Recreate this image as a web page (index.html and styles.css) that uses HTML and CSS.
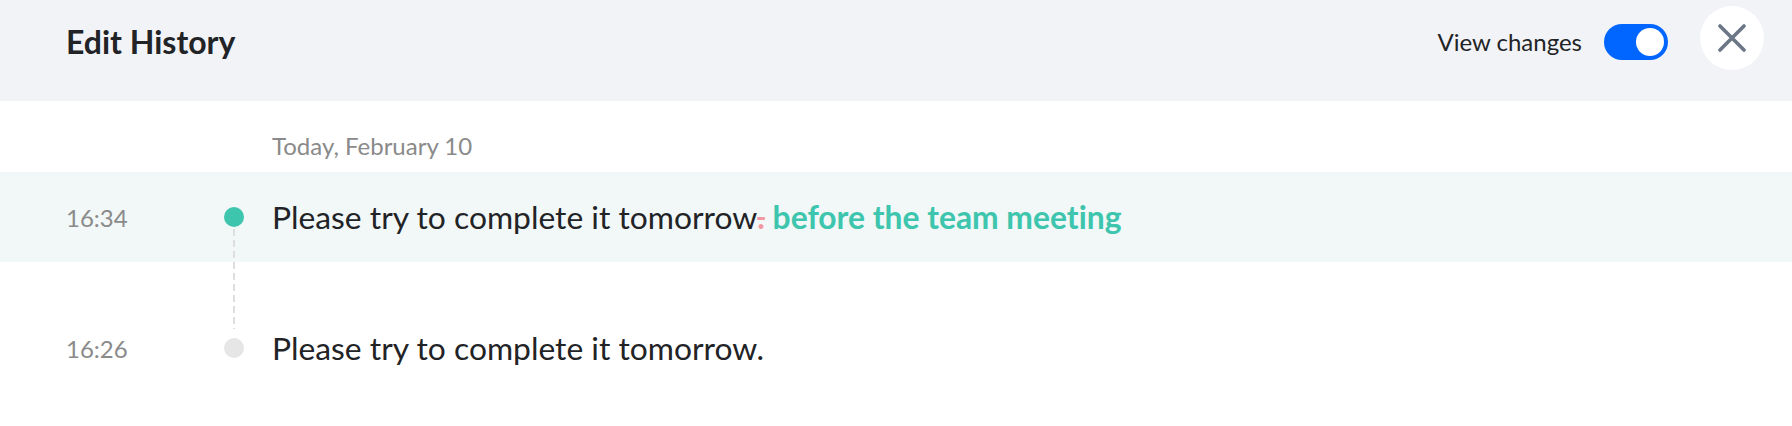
FILE: index.html
```html
<!DOCTYPE html>
<html lang="en">
<head>
<meta charset="utf-8">
<title>Edit History</title>
<link rel="stylesheet" href="styles.css">
</head>
<body>
<header class="header">
  <h1 class="title">Edit History</h1>
  <div class="actions">
    <span class="toggle-label">View changes</span>
    <span class="toggle"><span class="knob"></span></span>
    <button class="close" aria-label="Close">
      <svg width="28" height="28" viewBox="0 0 28 28"><path d="M2 2L26 26M26 2L2 26" stroke="#6b7785" stroke-width="3.6" stroke-linecap="round" fill="none"/></svg>
    </button>
  </div>
</header>
<main class="history">
  <div class="date">Today, February 10</div>
  <div class="row row-active">
    <span class="time">16:34</span>
    <span class="dot dot-active"></span>
    <p class="text">Please try to complete it tomorrow<del class="removed">.</del><ins class="added"> before the team meeting</ins></p>
  </div>
  <div class="row">
    <span class="time">16:26</span>
    <span class="dot"></span>
    <p class="text">Please try to complete it tomorrow.</p>
  </div>
</main>
</body>
</html>
```

FILE: styles.css
```css
* { box-sizing: border-box; }
html, body { margin: 0; padding: 0; background: #ffffff; }
body {
  font-family: Lato, "Noto Sans", "Liberation Sans", sans-serif;
  color: #222326;
  font-variant-ligatures: none;
}

.header {
  height: 101px;
  background: #f2f3f7;
  display: flex;
  align-items: center;
  justify-content: space-between;
  padding: 0 28px 17px 66px;
}
.title {
  margin: 0;
  font-size: 32px;
  font-weight: 700;
  line-height: 40px;
  color: #222326;
}
.actions { display: flex; align-items: center; }
.toggle-label { font-size: 24px; color: #222326; line-height: 32px; }
.toggle {
  margin-left: 22px;
  width: 64px;
  height: 36px;
  border-radius: 18px;
  background: #0066ff;
  padding: 4px;
  display: flex;
  justify-content: flex-end;
}
.knob { width: 28px; height: 28px; border-radius: 50%; background: #ffffff; }
.close {
  margin-left: 32px;
  margin-bottom: 8px;
  width: 64px;
  height: 64px;
  border-radius: 50%;
  border: 0;
  padding: 0;
  background: #ffffff;
  display: flex;
  align-items: center;
  justify-content: center;
}
.close svg { display: block; }

.history { padding-top: 29px; }
.date {
  padding-left: 272px;
  font-size: 24px;
  line-height: 32px;
  color: #8a8a8a;
  margin-bottom: 10px;
}
.row {
  height: 90px;
  display: flex;
  align-items: center;
  padding-left: 66px;
}
.row + .row { margin-top: 41px; }
.row-active { background: #f1f8f7; }
.time { width: 158px; font-size: 24px; color: #8a8a8a; }
.dot {
  position: relative;
  width: 20px;
  height: 20px;
  border-radius: 50%;
  background: #e6e6e6;
  flex: none;
}
.dot-active { background: #3ec5ad; }
.dot-active::after {
  content: "";
  position: absolute;
  left: 9px;
  top: 22px;
  width: 2px;
  height: 100px;
  background: repeating-linear-gradient(to bottom, #dedede 0 7px, transparent 7px 11px);
}
.text {
  margin: 0 0 0 28px;
  font-size: 31.8px;
  line-height: 38px;
  color: #222326;
}
.removed {
  color: #f29aa3;
  font-weight: 700;
  text-decoration: line-through;
  text-decoration-thickness: 3px;
}
.added { color: #3ec5ad; font-weight: 700; text-decoration: none; }
```
